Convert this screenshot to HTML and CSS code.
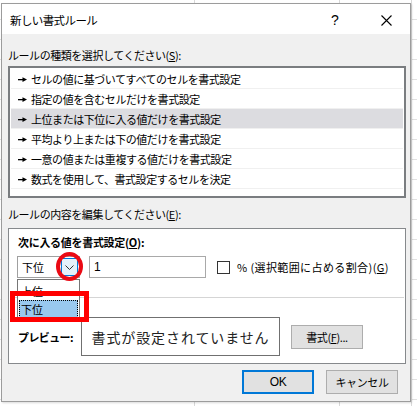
FILE: index.html
```html
<!DOCTYPE html>
<html lang="ja">
<head>
    <meta charset="UTF-8">
    <meta name="viewport" content="width=device-width, initial-scale=1.0">
    <title>新しい書式ルール</title>
    <link rel="stylesheet" href="styles.css">
</head>
<body>
    <div class="dialog">
        <!-- title bar -->
        <div class="titlebar">
            <div class="title">新しい書式ルール</div>
            <div class="help">?</div>
            <div class="close">
                <svg width="11" height="11" viewBox="0 0 11 11"><path d="M0.5 0.5 L10.5 10.5 M10.5 0.5 L0.5 10.5" stroke="#000" stroke-width="1.1" fill="none"/></svg>
            </div>
        </div>

        <div class="dialog-body">
            <div class="label first">ルールの種類を選択してください(<u>S</u>):</div>
            <ul class="rule-list">
                <li><span class="arrow"><svg width="9" height="5" viewBox="0 0 9 5"><rect x="0" y="2" width="5" height="1.3" fill="#000"/><polygon points="4.5,0.3 9,2.6 4.5,4.9" fill="#000"/></svg></span>セルの値に基づいてすべてのセルを書式設定</li>
                <li><span class="arrow"><svg width="9" height="5" viewBox="0 0 9 5"><rect x="0" y="2" width="5" height="1.3" fill="#000"/><polygon points="4.5,0.3 9,2.6 4.5,4.9" fill="#000"/></svg></span>指定の値を含むセルだけを書式設定</li>
                <li class="selected"><span class="arrow"><svg width="9" height="5" viewBox="0 0 9 5"><rect x="0" y="2" width="5" height="1.3" fill="#000"/><polygon points="4.5,0.3 9,2.6 4.5,4.9" fill="#000"/></svg></span>上位または下位に入る値だけを書式設定</li>
                <li><span class="arrow"><svg width="9" height="5" viewBox="0 0 9 5"><rect x="0" y="2" width="5" height="1.3" fill="#000"/><polygon points="4.5,0.3 9,2.6 4.5,4.9" fill="#000"/></svg></span>平均より上または下の値だけを書式設定</li>
                <li><span class="arrow"><svg width="9" height="5" viewBox="0 0 9 5"><rect x="0" y="2" width="5" height="1.3" fill="#000"/><polygon points="4.5,0.3 9,2.6 4.5,4.9" fill="#000"/></svg></span>一意の値または重複する値だけを書式設定</li>
                <li><span class="arrow"><svg width="9" height="5" viewBox="0 0 9 5"><rect x="0" y="2" width="5" height="1.3" fill="#000"/><polygon points="4.5,0.3 9,2.6 4.5,4.9" fill="#000"/></svg></span>数式を使用して、書式設定するセルを決定</li>
            </ul>

            <div class="label second">ルールの内容を編集してください(<u>E</u>):</div>
            <div class="panel">
                <div class="panel-title">次に入る値を書式設定(<u>O</u>):</div>
                <div class="value-row">
                    <div class="combo">
                        <span class="combo-text">下位</span>
                        <span class="combo-btn">
                            <svg width="9" height="5" viewBox="0 0 9 5"><path d="M0.5 0.5 L4.5 4.5 L8.5 0.5" stroke="#333" stroke-width="1" fill="none"/></svg>
                        </span>
                    </div>
                    <div class="num-input">1</div>
                    <span class="checkbox"></span>
                    <span class="check-label">% (選択範囲に占める割合)(<u>G</u>)</span>
                </div>
                <div class="separator"></div>
                <div class="preview-row">
                    <div class="preview-label">プレビュー:</div>
                    <div class="preview-box">書式が設定されていません</div>
                    <button class="btn format-btn">書式(<u>F</u>)...</button>
                </div>

                <!-- opened dropdown -->
                <div class="dropdown">
                    <div class="dropdown-item">上位</div>
                    <div class="dropdown-item active">下位</div>
                </div>

                <!-- red annotations -->
                <div class="mark-circle"></div>
                <div class="mark-rect"></div>
            </div>

            <div class="button-row">
                <button class="btn ok-btn">OK</button>
                <button class="btn">キャンセル</button>
            </div>
        </div>
    </div>
</body>
</html>
```

FILE: styles.css
```css
body {
    margin: 0;
    padding: 0;
    font-family: "Noto Sans CJK JP", "Noto Sans", sans-serif;
    font-size: 11px;
    color: #000;
    background-color: #fff;
    background-image:
        repeating-linear-gradient(90deg, transparent 0, transparent 71.5px, #d9d9d9 71.5px, #d9d9d9 72.5px),
        repeating-linear-gradient(180deg, transparent 0, transparent 19px, #e1e1e1 19px, #e1e1e1 20px);
    background-position: 50px 0, 0 0;
    height: 406px;
    overflow: hidden;
}

.dialog {
    margin: 3px 0 0 1px;
    width: 410px;
    height: 399px;
    box-sizing: border-box;
    border: 1px solid #9c9c9c;
    background-color: #f0f0f0;
    box-shadow: 1px 1px 2px rgba(0, 0, 0, 0.15);
    display: flex;
    flex-direction: column;
}

.titlebar {
    height: 30px;
    background-color: #fff;
    display: flex;
    align-items: center;
}

.title {
    flex: 1;
    padding-left: 8px;
    font-size: 11.5px;
    letter-spacing: -0.6px;
    padding-top: 1px;
}

.help {
    width: 20px;
    font-family: "Liberation Sans", sans-serif;
    font-size: 14px;
    margin-right: 30px;
    padding-top: 1px;
}

.close {
    width: 14px;
    margin-right: 15px;
    display: flex;
    padding-top: 2px;
}

.dialog-body {
    flex: 1;
    padding: 0 4px 0 6px;
    display: flex;
    flex-direction: column;
}

.label {
    height: 16px;
    line-height: 16px;
    letter-spacing: -0.45px;
}

.label.first {
    margin-top: 13px;
}

.label.second {
    margin-top: 8px;
}

u {
    text-decoration: underline;
    text-underline-offset: 1px;
}

.rule-list {
    list-style: none;
    margin: 3px 0 0 0;
    padding: 1px;
    width: 398px;
    height: 132px;
    box-sizing: border-box;
    border: 2px solid #7a7d80;
    background-color: #fff;
}

.rule-list li {
    height: 20px;
    box-sizing: border-box;
    border-bottom: 1px solid #f0f0f0;
    display: flex;
    align-items: center;
    padding-left: 7px;
    letter-spacing: -0.45px;
}

.rule-list li.selected {
    background-color: #dcdce0;
}

.arrow {
    display: flex;
    width: 13px;
    margin-top: 1px;
}

.panel {
    position: relative;
    margin-top: 6px;
    width: 398px;
    height: 136px;
    box-sizing: border-box;
    border: 1px solid #86898c;
    background-color: #fff;
    padding: 5px 2px 6px 9px;
}

.panel-title {
    height: 16px;
    line-height: 16px;
    font-weight: bold;
    letter-spacing: -0.3px;
}

.value-row {
    margin-top: 6px;
    height: 22px;
    display: flex;
    align-items: center;
}

.combo {
    margin-left: -1px;
    width: 63px;
    height: 22px;
    box-sizing: border-box;
    border: 1px solid #a0a0a0;
    display: flex;
    align-items: center;
    justify-content: space-between;
    padding: 0 1px 0 4px;
    background-color: #fff;
}

.combo-btn {
    width: 17px;
    height: 18px;
    box-sizing: border-box;
    border: 1px solid #0078d7;
    background-color: #e5f1fb;
    display: flex;
    align-items: center;
    justify-content: center;
}

.num-input {
    margin-left: 9px;
    width: 117px;
    height: 22px;
    box-sizing: border-box;
    border: 1px solid #a9a9a9;
    line-height: 20px;
    padding-left: 4px;
    font-family: "Liberation Sans", sans-serif;
    font-size: 12px;
}

.checkbox {
    margin-left: 11px;
    width: 13px;
    height: 13px;
    box-sizing: border-box;
    border: 1px solid #333;
    background-color: #fff;
}

.check-label {
    margin-left: 7px;
    letter-spacing: 0.4px;
}

.separator {
    margin: 19px -1px 0 -6px;
    height: 1px;
    background-color: #d5d5d5;
}

.preview-row {
    margin-top: 19px;
    display: flex;
    align-items: center;
}

.preview-label {
    width: 63px;
    font-weight: bold;
    letter-spacing: -0.6px;
}

.preview-box {
    width: 199px;
    height: 39px;
    box-sizing: border-box;
    border: 1px solid #707070;
    display: flex;
    align-items: center;
    justify-content: center;
    font-size: 14px;
    letter-spacing: 0.9px;
    color: #222;
}

.btn {
    font-family: "Noto Sans CJK JP", "Noto Sans", sans-serif;
    font-size: 11px;
    color: #000;
    width: 72px;
    height: 24px;
    box-sizing: border-box;
    border: 1px solid #adadad;
    background-color: #e1e1e1;
    padding: 0;
    letter-spacing: -0.4px;
}

.format-btn {
    margin-left: 11px;
}

.button-row {
    margin-top: 6px;
    margin-right: 8px;
    display: flex;
    justify-content: flex-end;
    gap: 12px;
}

.ok-btn {
    border: 2px solid #0078d7;
    font-family: "Liberation Sans", sans-serif;
    font-size: 12px;
}

/* open combo list, lies over the panel */
.dropdown {
    position: absolute;
    left: 8px;
    top: 50px;
    width: 63px;
    height: 40px;
    box-sizing: border-box;
    border: 1px solid #767676;
    background-color: #fff;
    padding: 1px;
}

.dropdown-item {
    height: 17px;
    line-height: 17px;
    padding-left: 2px;
    margin-top: 2px;
}

.dropdown-item.active {
    margin-top: 0;
    height: 18px;
    line-height: 16px;
    background-color: #99c9ef;
    border: 1px dotted #000;
    box-sizing: border-box;
    padding-left: 1px;
}

.mark-circle {
    position: absolute;
    left: 47px;
    top: 23px;
    width: 27px;
    height: 29px;
    box-sizing: border-box;
    border: 4px solid #ea0a14;
    border-radius: 50%;
}

.mark-rect {
    position: absolute;
    left: 1px;
    top: 62px;
    width: 79px;
    height: 31px;
    box-sizing: border-box;
    border: 5px solid #f00;
}
```
